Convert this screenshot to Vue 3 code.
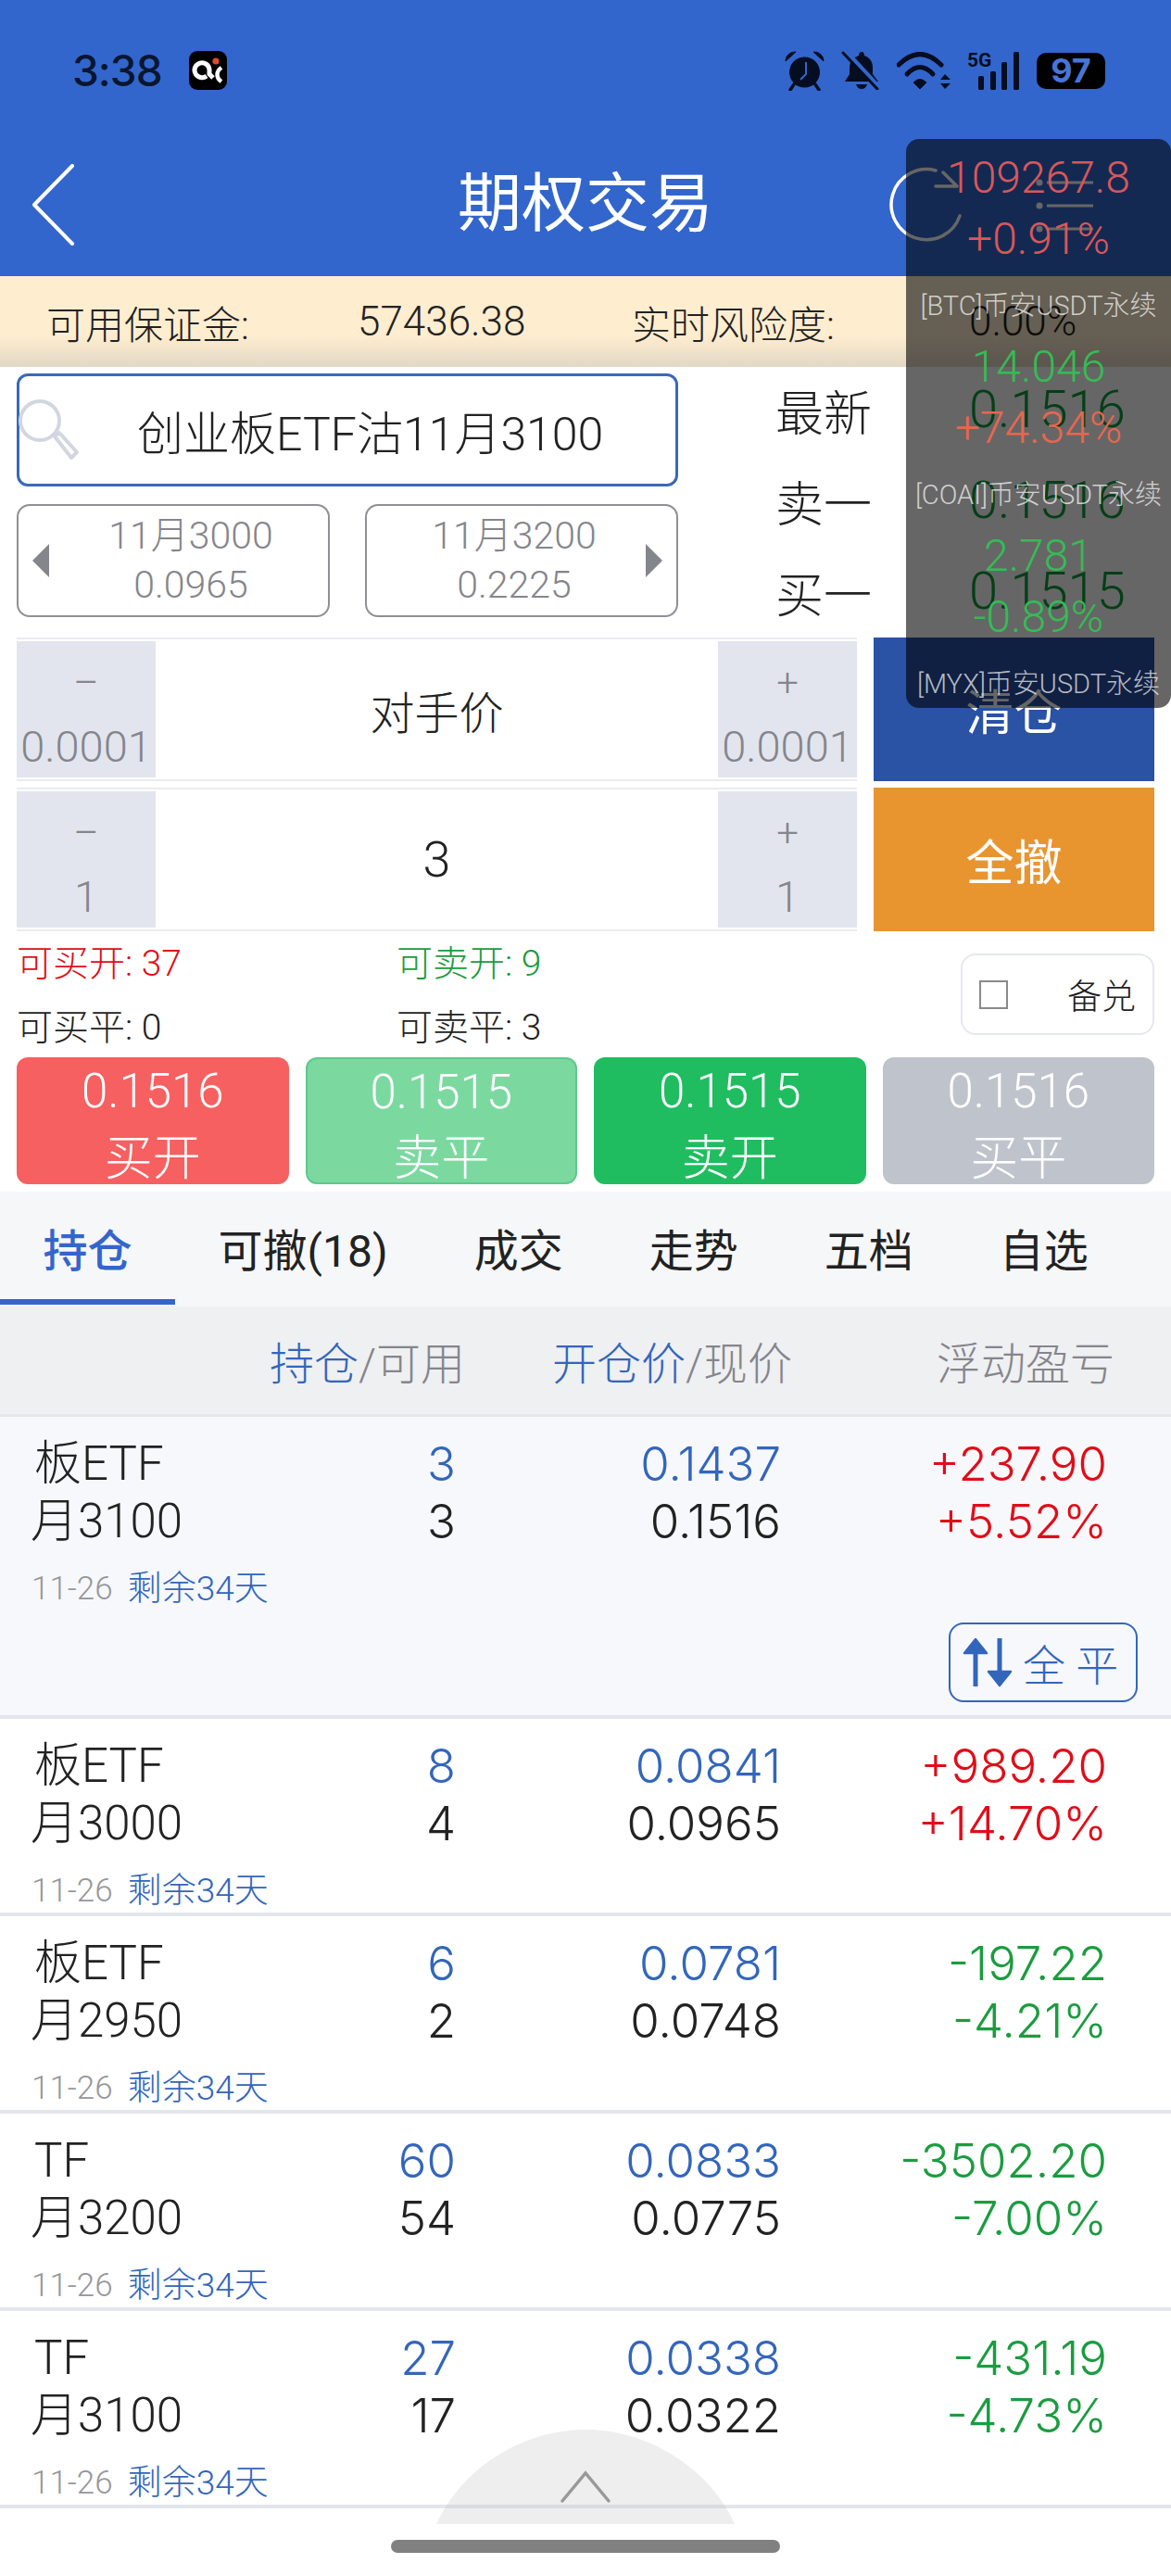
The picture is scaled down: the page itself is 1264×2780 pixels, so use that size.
<script setup>
const tabs = ['持仓', '可撤(18)', '成交', '走势', '五档', '自选']

const positions = [
  { name: '板ETF', month: '月3100', hold: 3, avail: 3, open: '0.1437', now: '0.1516', pl: '+237.90', pct: '+5.52%', up: true, open_row: true },
  { name: '板ETF', month: '月3000', hold: 8, avail: 4, open: '0.0841', now: '0.0965', pl: '+989.20', pct: '+14.70%', up: true },
  { name: '板ETF', month: '月2950', hold: 6, avail: 2, open: '0.0781', now: '0.0748', pl: '-197.22', pct: '-4.21%', up: false },
  { name: 'TF', month: '月3200', hold: 60, avail: 54, open: '0.0833', now: '0.0775', pl: '-3502.20', pct: '-7.00%', up: false },
  { name: 'TF', month: '月3100', hold: 27, avail: 17, open: '0.0338', now: '0.0322', pl: '-431.19', pct: '-4.73%', up: false }
]

const tickers = [
  { price: '109267.8', pct: '+0.91%', label: '[BTC]币安USDT永续', up: true },
  { price: '14.046', pct: '+74.34%', label: '[COAI]币安USDT永续', up: true, green: true },
  { price: '2.781', pct: '-0.89%', label: '[MYX]币安USDT永续', up: false, green: true }
]

const actions = [
  { price: '0.1516', label: '买开', cls: 'buy-open' },
  { price: '0.1515', label: '卖平', cls: 'sell-close' },
  { price: '0.1515', label: '卖开', cls: 'sell-open' },
  { price: '0.1516', label: '买平', cls: 'buy-close' }
]
</script>

<template>
  <div class="page">
    <div class="header">
      <div class="status">
        <span class="time">3:38</span>
        <svg class="app-icon" width="41" height="42" viewBox="0 0 41 42">
          <rect width="41" height="42" rx="9" fill="#000" />
          <path d="M19 27A8 8 0 1 1 22 20V25L26 29" fill="none" stroke="#fff" stroke-width="5" />
          <path d="M35 18C29 22 29 29 35 33" fill="none" stroke="#fff" stroke-width="4.5" />
          <circle cx="29" cy="11" r="3.6" fill="#e0492c" />
        </svg>
        <div class="status-right">
          <svg width="43" height="44" viewBox="0 0 43 44">
            <path d="M1 12A10 10 0 0 1 12 2ZM42 12A10 10 0 0 0 31 2Z" fill="#050d20" stroke="#050d20" stroke-linejoin="round" />
            <circle cx="21.500" cy="24" r="16.500" fill="#050d20" />
            <path d="M10 37L6 43M33 37L37 43" stroke="#050d20" stroke-width="3.500" stroke-linecap="round" />
            <path d="M23 13V26L17 32" fill="none" stroke="#3366cc" stroke-width="2" />
          </svg>
          <svg width="42" height="42" viewBox="0 0 42 42">
            <path d="M22 1C24 1 25 3 25 5C31 7 34 12 34 18V25L40 33H4L9 25V18C9 12 13 7 19 5C19 3 20 1 22 1Z" fill="#050d20" />
            <path d="M16 36H28C27 39 25 41 22 41C19 41 17 39 16 36Z" fill="#050d20" />
            <path d="M4 0L41 40" stroke="#3366cc" stroke-width="6" />
            <path d="M2 2L39 41" stroke="#050d20" stroke-width="3" stroke-linecap="round" />
          </svg>
          <svg width="58" height="41" viewBox="0 0 58 41">
            <path d="M2 14Q25 -9 48 14" fill="none" stroke="#050d20" stroke-width="5" stroke-linecap="round" />
            <path d="M11 24Q25 9 39 24" fill="none" stroke="#050d20" stroke-width="5" stroke-linecap="round" />
            <path d="M18 33Q25 26 32 33L25 40Z" fill="#050d20" stroke="#050d20" stroke-linejoin="round" />
            <path d="M47 30L52 24L58 30ZM47 34H58L52 40Z" fill="#050d20" />
          </svg>
          <svg class="signal" width="57" height="41" viewBox="0 0 57 41">
            <text x="0" y="16" class="five-g">5G</text>
            <rect x="12" y="26" width="6" height="15" rx="1.500" fill="#050d20" />
            <rect x="25" y="21" width="6" height="20" rx="1.500" fill="#050d20" />
            <rect x="37" y="11" width="6" height="30" rx="1.500" fill="#050d20" />
            <rect x="50" y="0" width="6" height="41" rx="1.500" fill="#050d20" />
          </svg>
          <div class="battery">97</div>
        </div>
      </div>
      <div class="nav">
        <svg class="back" width="48" height="88" viewBox="0 0 48 88">
          <path d="M44 2L3 44L44 86" fill="none" stroke="#fff" stroke-width="4" stroke-linecap="round" stroke-linejoin="round" />
        </svg>
        <div class="title">期权交易</div>
        <div class="nav-right">
          <svg width="82" height="84" viewBox="0 0 82 84">
            <path d="M52 5A38 38 0 1 0 78 54" fill="none" stroke="#fff" stroke-width="3.500" stroke-linecap="round" />
            <path d="M52 22H74M60 7L75 22" fill="none" stroke="#fff" stroke-width="3.500" stroke-linecap="round" />
          </svg>
          <svg width="64" height="60" viewBox="0 0 64 60">
            <circle cx="6" cy="6" r="3.500" fill="#fff" />
            <circle cx="6" cy="31" r="3.500" fill="#fff" />
            <circle cx="6" cy="56" r="3.500" fill="#fff" />
            <path d="M14 6H64M14 31H64M14 56H64" stroke="#fff" stroke-width="3" />
          </svg>
        </div>
      </div>
    </div>

    <div class="margin-bar">
      <span>可用保证金:</span>
      <span>57436.38</span>
      <span>实时风险度:</span>
      <span>0.00%</span>
    </div>

    <div class="quote">
      <div class="quote-left">
        <div class="search">
          <svg class="search-icon" width="72" height="80" viewBox="0 0 72 80">
            <circle cx="27" cy="30" r="21" fill="none" stroke="#d2d6e0" stroke-width="4" />
            <path d="M43 47L48 43L67 64L61 70Z" fill="none" stroke="#d2d6e0" stroke-width="4" stroke-linejoin="round" />
          </svg>
          <span>创业板ETF沽11月3100</span>
        </div>
        <div class="pair">
          <div class="pair-item prev">
            <i class="arrow left"></i>
            <div>11月3000</div>
            <div>0.0965</div>
          </div>
          <div class="pair-item next">
            <div>11月3200</div>
            <div>0.2225</div>
            <i class="arrow right"></i>
          </div>
        </div>
      </div>
      <div class="quote-right">
        <div class="quote-row"><span>最新</span><b>0.1516</b></div>
        <div class="quote-row"><span>卖一</span><b>0.1516</b></div>
        <div class="quote-row"><span>买一</span><b>0.1515</b></div>
      </div>
    </div>

    <div class="controls">
      <div class="stepper">
        <div class="step"><span class="sign">–</span><span>0.0001</span></div>
        <div class="step-value">对手价</div>
        <div class="step"><span class="sign">+</span><span>0.0001</span></div>
      </div>
      <div class="big-btn clear">清仓</div>
      <div class="stepper">
        <div class="step"><span class="sign">–</span><span>1</span></div>
        <div class="step-value qty">3</div>
        <div class="step"><span class="sign">+</span><span>1</span></div>
      </div>
      <div class="big-btn cancel">全撤</div>
    </div>

    <div class="info">
      <div class="info-grid">
        <span class="red">可买开: 37</span>
        <span class="green">可卖开: 9</span>
        <span>可买平: 0</span>
        <span>可卖平: 3</span>
      </div>
      <div class="covered">
        <i class="check"></i>
        <span>备兑</span>
      </div>
    </div>

    <div class="actions">
      <div v-for="a in actions" :key="a.cls" class="action" :class="a.cls">
        <div class="action-price">{{ a.price }}</div>
        <div class="action-label">{{ a.label }}</div>
      </div>
    </div>

    <div class="tabs">
      <div v-for="(t, i) in tabs" :key="t" class="tab" :class="{ active: i === 0 }">{{ t }}</div>
    </div>

    <div class="table-head">
      <span></span>
      <span><em>持仓</em>/可用</span>
      <span><em>开仓价</em>/现价</span>
      <span>浮动盈亏</span>
    </div>

    <div v-for="(p, i) in positions" :key="i" class="pos" :class="{ expanded: p.open_row }">
      <div class="pos-line">
        <span class="pos-name">{{ p.name }}</span>
        <span class="num blue">{{ p.hold }}</span>
        <span class="num blue">{{ p.open }}</span>
        <span class="num" :class="p.up ? 'red' : 'green'">{{ p.pl }}</span>
      </div>
      <div class="pos-line">
        <span>{{ p.month }}</span>
        <span class="num">{{ p.avail }}</span>
        <span class="num">{{ p.now }}</span>
        <span class="num" :class="p.up ? 'red' : 'green'">{{ p.pct }}</span>
      </div>
      <div class="pos-date">11-26<em>剩余34天</em></div>
      <div v-if="p.open_row" class="pos-tools">
        <div class="close-all">
          <svg width="56" height="54" viewBox="0 0 56 54">
            <path d="M15 53V13" stroke="#3366bb" stroke-width="5" />
            <path d="M3 17L15 2L27 17Z" fill="#3366bb" stroke="#3366bb" stroke-width="2.500" stroke-linejoin="round" />
            <path d="M41 1V41" stroke="#3366bb" stroke-width="5" />
            <path d="M29 37L41 52L53 37Z" fill="#3366bb" stroke="#3366bb" stroke-width="2.500" stroke-linejoin="round" />
          </svg>
          <span>全 平</span>
        </div>
      </div>
    </div>

    <svg class="arc" width="322" height="102" viewBox="0 0 322 102">
      <path d="M0 102C28 40 95 0 161 0C227 0 294 40 322 102Z" fill="rgba(190,190,190,0.26)" />
      <path d="M136 77L161 47L186 77" fill="none" stroke="#999" stroke-width="3.500" stroke-linecap="round" />
    </svg>
    <div class="home-bar"></div>

    <div class="ticker">
      <template v-for="t in tickers" :key="t.label">
        <div class="tick-num" :class="t.green ? 'g' : 'r'">{{ t.price }}</div>
        <div class="tick-num" :class="t.up ? (t.green ? 'o' : 'r') : 'g'">{{ t.pct }}</div>
        <div class="tick-label">{{ t.label }}</div>
      </template>
    </div>
  </div>
</template>

<style scoped>
.page {
  position: relative;
  width: 1264px;
  height: 2780px;
  overflow: hidden;
  background: #fff;
  color: #222;
  font-family: Roboto, "Noto Sans CJK SC", sans-serif;
  font-weight: 300;
}

em,
i {
  font-style: normal;
}

.header {
  height: 298px;
  background: #3366cc;
}

.status {
  display: flex;
  align-items: flex-start;
  height: 152px;
  padding: 54px 71px 0 78px;
  box-sizing: border-box;
}

.time {
  width: 126px;
  color: #0a1630;
  font-size: 46px;
  line-height: 44px;
  font-weight: 500;
  font-family: Inter, sans-serif;
  letter-spacing: -1px;
}

.app-icon {
  margin-top: 1px;
}

.status-right {
  display: flex;
  align-items: center;
  gap: 18px;
  margin-left: auto;
}

.signal {
  overflow: visible;
}

.five-g {
  font-family: Roboto, sans-serif;
  font-size: 21px;
  font-weight: 700;
  fill: #050d20;
}

.battery {
  width: 74px;
  height: 39px;
  background: #000;
  border-radius: 10px;
  color: #4675d6;
  font-size: 36px;
  line-height: 39px;
  font-weight: 700;
  text-align: center;
  font-family: Inter, sans-serif;
}

.nav {
  display: grid;
  grid-template-columns: 1fr auto 1fr;
  align-items: center;
  height: 146px;
  padding-bottom: 8px;
  box-sizing: border-box;
}

.back {
  margin-left: 34px;
}

.title {
  color: #fff;
  font-size: 69px;
  line-height: 80px;
  font-weight: 400;
}

.nav-right {
  display: flex;
  align-items: center;
  justify-content: flex-end;
  gap: 76px;
  padding-right: 84px;
}

.margin-bar {
  display: grid;
  grid-template-columns: 336px 296px 364px auto;
  align-items: center;
  height: 98px;
  padding-left: 50px;
  box-sizing: border-box;
  background: linear-gradient(#ffedd0 0%, #ffedd0 65%, #e3d8c4 100%);
  font-size: 44px;
}

.margin-bar span:nth-child(odd) {
  font-size: 42px;
}

.quote {
  display: flex;
  height: 292px;
  padding: 0 18px;
}

.quote-left {
  width: 714px;
  padding-top: 7px;
}

.search {
  display: flex;
  align-items: center;
  height: 122px;
  box-sizing: border-box;
  border: 3px solid #3a69b8;
  border-radius: 12px;
  font-size: 50px;
}

.search span {
  margin-left: 60px;
  white-space: nowrap;
}

.search-icon {
  margin: 0 0 0 -5px;
  flex: none;
}

.pair {
  display: flex;
  gap: 38px;
  margin-top: 19px;
}

.pair-item {
  position: relative;
  flex: 0 0 338px;
  height: 122px;
  box-sizing: border-box;
  padding-top: 6px;
  border: 2px solid #8f8f95;
  border-radius: 14px;
  color: #85858c;
  font-size: 41px;
  line-height: 53px;
  text-align: center;
}

.prev {
  padding-left: 38px;
}

.next {
  padding-right: 16px;
}

.arrow {
  position: absolute;
  top: 41px;
  width: 0;
  height: 0;
  border-top: 18px solid transparent;
  border-bottom: 18px solid transparent;
}

.arrow.left {
  left: 15px;
  border-right: 18px solid #85858c;
}

.arrow.right {
  right: 15px;
  border-left: 18px solid #85858c;
}

.quote-right {
  padding: 0 0 0 105px;
  margin-top: -3px;
}

.quote-row {
  display: flex;
  align-items: center;
  height: 98px;
  font-size: 52px;
}

.quote-row b {
  margin-left: 105px;
  color: #109c3c;
  font-size: 56px;
  font-weight: 300;
}

.controls {
  display: grid;
  grid-template-columns: 907px 303px;
  grid-auto-rows: 155px;
  gap: 7px 18px;
  padding: 0 18px;
}

.stepper {
  display: flex;
  box-sizing: border-box;
  padding: 2px 0;
  border-top: 2px solid #ececf0;
  border-bottom: 2px solid #ececf0;
}

.step {
  display: flex;
  flex-direction: column;
  align-items: center;
  justify-content: space-between;
  width: 150px;
  padding: 20px 0 6px;
  box-sizing: border-box;
  background: #e2e5ee;
  color: #85858c;
  font-size: 47px;
  line-height: 54px;
}

.sign {
  font-size: 42px;
  line-height: 50px;
}

.step-value {
  flex: 1;
  display: flex;
  align-items: center;
  justify-content: center;
  font-size: 48px;
}

.qty {
  font-size: 54px;
}

.big-btn {
  display: flex;
  align-items: center;
  justify-content: center;
  color: #fff;
  font-size: 52px;
  font-weight: 400;
}

.clear {
  background: #2a52a5;
}

.cancel {
  background: #e89530;
}

.info {
  display: flex;
  height: 136px;
  padding: 0 18px 0 18px;
}

.info-grid {
  display: grid;
  grid-template-columns: 410px 300px;
  grid-auto-rows: 69px;
  align-items: center;
  margin-top: -4px;
  height: 138px;
  font-size: 39px;
  white-space: nowrap;
}

.red {
  color: #e00d18;
}

.green {
  color: #1b9c3f;
}

.blue {
  color: #3366bb;
}

.covered {
  display: flex;
  align-items: center;
  justify-content: space-between;
  width: 209px;
  height: 88px;
  margin: 24px 0 0 auto;
  padding: 0 18px;
  box-sizing: border-box;
  border: 2px solid #e6e8ef;
  border-radius: 16px;
  font-size: 37px;
}

.check {
  width: 31px;
  height: 31px;
  box-sizing: border-box;
  border: 2px solid #8a8a8a;
}

.actions {
  display: grid;
  grid-template-columns: repeat(4, 1fr);
  grid-template-rows: 137px;
  gap: 18px;
  padding: 0 18px;
}

.action {
  height: 137px;
  border-radius: 12px;
  box-sizing: border-box;
  color: #fff;
  text-align: center;
}

.action-price {
  height: 74px;
  font-size: 51px;
  line-height: 74px;
}

.action-label {
  height: 62px;
  font-size: 52px;
  line-height: 72px;
}

.buy-open {
  background: #f76060;
}

.sell-close {
  background: #7bd9a0;
  border: 2px solid #5cc98a;
}

.sell-close .action-price {
  height: 72px;
  line-height: 72px;
}

.sell-open {
  background: #20bd60;
}

.buy-close {
  background: #bfc4cc;
}

.tabs {
  display: flex;
  height: 124px;
  margin-top: 8px;
  background: #f6f7f9;
  box-sizing: border-box;
  padding-bottom: 2px;
}

.tab {
  display: flex;
  align-items: center;
  padding: 4px 46.5px 0;
  border-bottom: 6px solid transparent;
  font-size: 48px;
  font-weight: 400;
  white-space: nowrap;
}

.tab.active {
  color: #3366cc;
  font-weight: 500;
  border-bottom-color: #3366cc;
}

.table-head {
  display: grid;
  grid-template-columns: 250px 252px 353px 348px;
  align-items: center;
  height: 119px;
  box-sizing: border-box;
  border-bottom: 3px solid #e6e7ee;
  background: #eff0f2;
  color: #85858c;
  font-size: 48px;
  text-align: right;
  white-space: nowrap;
}

.table-head em {
  color: #3366bb;
}

.pos {
  height: 213px;
  padding-top: 20px;
  box-sizing: border-box;
  border-bottom: 4px solid #e4e6ec;
}

.pos.expanded {
  height: 326px;
  background: #f7f8fb;
}

.pos-line {
  display: grid;
  grid-template-columns: 250px 242px 351px 352px;
  height: 62px;
  font-size: 51px;
  line-height: 62px;
  text-align: right;
}

.num {
  font-family: Inter, sans-serif;
  font-size: 51px;
}

.pos-line span:first-child {
  padding-left: 33px;
  text-align: left;
}

.pos-line .pos-name:first-child {
  padding-left: 37px;
}

.pos-date {
  display: flex;
  gap: 16px;
  height: 48px;
  margin-top: 18px;
  padding-left: 34px;
  color: #96969c;
  font-size: 35px;
  line-height: 48px;
}

.pos-date em {
  color: #3366bb;
  font-size: 37px;
}

.pos-tools {
  display: flex;
  justify-content: flex-end;
  margin-top: 12px;
  padding-right: 36px;
}

.close-all {
  display: flex;
  align-items: center;
  gap: 10px;
  width: 204px;
  height: 86px;
  padding-left: 12px;
  box-sizing: border-box;
  border: 2px solid #3366bb;
  border-radius: 16px;
  color: #3366bb;
  font-size: 46px;
  white-space: nowrap;
}

.arc {
  position: absolute;
  left: 471px;
  top: 2622px;
}

.home-bar {
  position: absolute;
  left: 422px;
  top: 2741px;
  width: 420px;
  height: 14px;
  border-radius: 7px;
  background: #808080;
}

.ticker {
  position: absolute;
  left: 978px;
  top: 150px;
  width: 286px;
  height: 614px;
  padding-top: 9px;
  box-sizing: border-box;
  border-radius: 14px;
  background: rgba(0, 0, 0, 0.6);
  text-align: center;
}

.tick-num {
  height: 66px;
  font-size: 48px;
  line-height: 66px;
}

.tick-num.r {
  color: #d9575a;
}

.tick-num.g {
  color: #35bb55;
}

.tick-num.o {
  color: #e8664f;
}

.tick-label {
  height: 72px;
  padding-top: 6px;
  box-sizing: border-box;
  color: rgba(255, 255, 255, 0.7);
  font-size: 29px;
  line-height: 66px;
  white-space: nowrap;
}
</style>
